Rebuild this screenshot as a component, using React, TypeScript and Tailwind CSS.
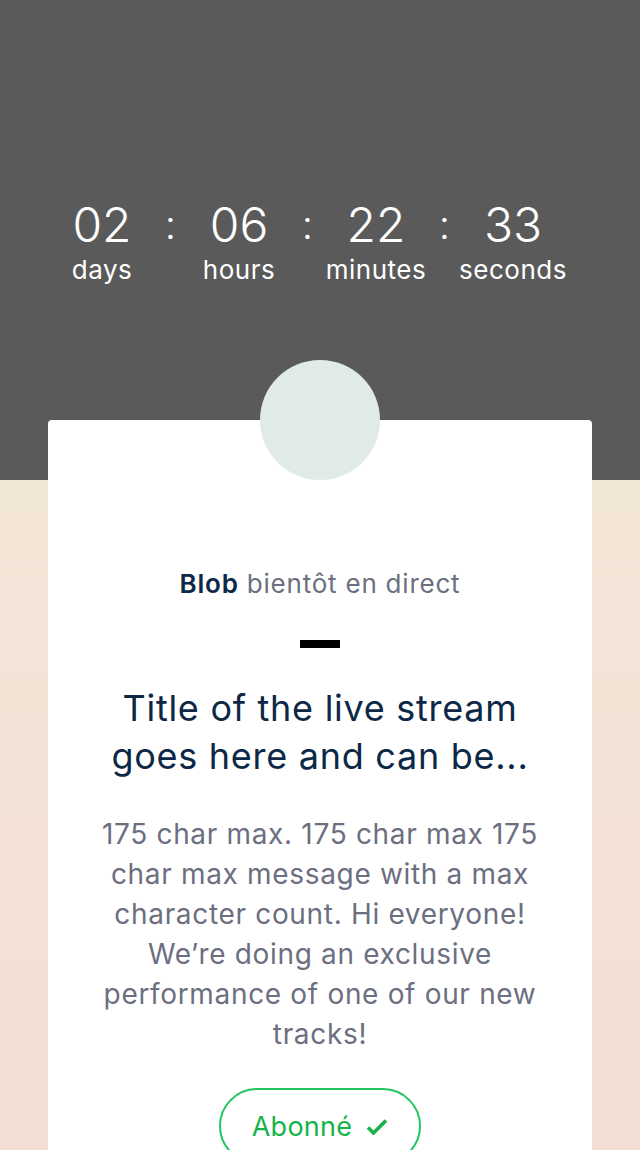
import React from "react";

const units = [
  { v: "02", l: "days" },
  { v: "06", l: "hours" },
  { v: "22", l: "minutes" },
  { v: "33", l: "seconds" },
];

export default function App() {
  return (
    <div
      className="relative w-[640px] h-[1150px] overflow-hidden"
      style={{ fontFamily: "Inter, 'Noto Sans', sans-serif" }}
    >
      <div className="h-[480px] bg-[#5a5a5a] flex flex-col">
        <div className="pt-[196px] pl-[47px] flex text-white">
          {units.map((u, i) => (
            <React.Fragment key={u.l}>
              {i > 0 && (
                <div className="w-[27px] text-center text-[40px] leading-[58px] font-light">:</div>
              )}
              <div className="w-[110px] flex flex-col items-center">
                <div className="text-[48px] leading-[58px] font-light">{u.v}</div>
                <div className="text-[26px] leading-[30px] tracking-[0.02em] mt-[1px]">{u.l}</div>
              </div>
            </React.Fragment>
          ))}
        </div>
      </div>
      <div className="h-[670px] bg-gradient-to-b from-[#f2e6d7] to-[#f4dfd4]" />
      <div className="absolute left-[48px] top-[420px] w-[544px] h-[760px] bg-white rounded-t-[4px] flex flex-col items-center">
        <div className="-mt-[60px] w-[120px] h-[120px] rounded-full bg-[#e0ebe7]" />
        <div className="mt-[84px] text-[26px] leading-[40px] tracking-[0.03em] text-[#6b6f80]">
          <span className="font-semibold text-[#0d2847]">Blob</span> bientôt en direct
        </div>
        <div className="mt-[36px] w-[40px] h-[8px] bg-black" />
        <div className="mt-[36px] text-[36px] leading-[48px] tracking-[0.02em] text-[#0d2847] text-center px-[40px]">
          Title of the live stream
          <br />
          goes here and can be...
        </div>
        <div className="mt-[34px] text-[28px] leading-[40px] tracking-[0.024em] text-[#6b6f80] text-center px-[52px]">
          175 char max. 175 char max 175 char max message with a max character count. Hi everyone! We’re doing an exclusive performance of one of our new tracks!
        </div>
        <div className="mt-[34px] w-[202px] h-[76px] rounded-full border-2 border-[#22c55e] flex items-center justify-center gap-[14px] text-[#16b34a] text-[27px] pt-[2px] tracking-[0.01em]">
          <span>Abonné</span>
          <svg width="22" height="18" viewBox="0 0 22 18" fill="none">
            <path d="M2 9.5l5.5 5.5L20 2.5" stroke="#16b34a" strokeWidth="3.6" strokeLinecap="butt" strokeLinejoin="miter" />
          </svg>
        </div>
      </div>
    </div>
  );
}
